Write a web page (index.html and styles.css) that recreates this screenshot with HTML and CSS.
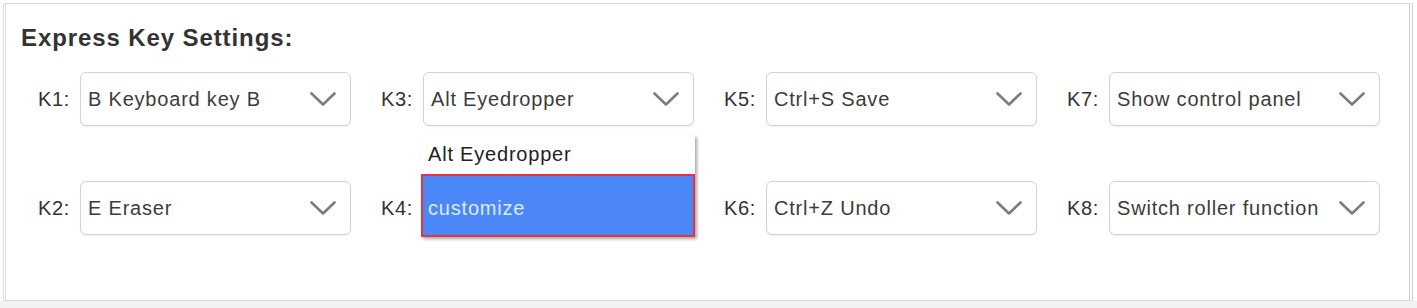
FILE: index.html
```html
<!DOCTYPE html>
<html>
<head>
<meta charset="utf-8">
<link rel="stylesheet" href="styles.css">
</head>
<body>
<div class="page">
  <section class="panel">
    <h1 class="title">Express Key Settings:</h1>
    <div class="keys">
      <div class="key"><span class="lbl">K1:</span><div class="sel"><span>B Keyboard key B</span><svg class="chev" viewBox="0 0 26 14"><polyline points="1.5,1.5 13,12.5 24.5,1.5"/></svg></div></div>
      <div class="key has-pop"><span class="lbl">K3:</span><div class="sel"><span>Alt Eyedropper</span><svg class="chev" viewBox="0 0 26 14"><polyline points="1.5,1.5 13,12.5 24.5,1.5"/></svg></div>
        <div class="pop">
          <div class="opt">Alt Eyedropper</div>
          <div class="opt active">customize</div>
        </div>
      </div>
      <div class="key"><span class="lbl">K5:</span><div class="sel"><span>Ctrl+S Save</span><svg class="chev" viewBox="0 0 26 14"><polyline points="1.5,1.5 13,12.5 24.5,1.5"/></svg></div></div>
      <div class="key"><span class="lbl">K7:</span><div class="sel"><span>Show control panel</span><svg class="chev" viewBox="0 0 26 14"><polyline points="1.5,1.5 13,12.5 24.5,1.5"/></svg></div></div>
      <div class="key"><span class="lbl">K2:</span><div class="sel"><span>E Eraser</span><svg class="chev" viewBox="0 0 26 14"><polyline points="1.5,1.5 13,12.5 24.5,1.5"/></svg></div></div>
      <div class="key"><span class="lbl">K4:</span><div class="sel"><span></span><svg class="chev" viewBox="0 0 26 14"><polyline points="1.5,1.5 13,12.5 24.5,1.5"/></svg></div></div>
      <div class="key"><span class="lbl">K6:</span><div class="sel"><span>Ctrl+Z Undo</span><svg class="chev" viewBox="0 0 26 14"><polyline points="1.5,1.5 13,12.5 24.5,1.5"/></svg></div></div>
      <div class="key"><span class="lbl">K8:</span><div class="sel"><span>Switch roller function</span><svg class="chev" viewBox="0 0 26 14"><polyline points="1.5,1.5 13,12.5 24.5,1.5"/></svg></div></div>
    </div>
  </section>
  <div class="foot"></div>
</div>
</body>
</html>
```

FILE: styles.css
```css
html, body {
  margin: 0;
  padding: 0;
  background: #ffffff;
}
body {
  width: 1417px;
  height: 308px;
  overflow: hidden;
  font-family: "Liberation Sans", Arial, sans-serif;
}
.page {
  display: flex;
  flex-direction: column;
  height: 308px;
}
.panel {
  box-sizing: border-box;
  margin: 3px 4px 0 3px;
  height: 298px;
  border: 1px solid #dadada;
  border-right: 4px double #d2d2d2;
  border-left: 3px double #dcdcdc;
  background: #fff;
  padding: 22px 0 0 15px;
}
.title {
  margin: 0;
  font-size: 24px;
  line-height: 24px;
  font-weight: bold;
  letter-spacing: 0.9px;
  color: #333;
}
.keys {
  margin-top: 22px;
  padding-left: 17px;
  display: grid;
  grid-template-columns: repeat(4, 313px);
  column-gap: 30px;
  row-gap: 55px;
}
.key {
  display: flex;
  align-items: center;
  position: relative;
}
.lbl {
  width: 42px;
  flex: none;
  font-size: 20px;
  letter-spacing: 0.6px;
  color: #333;
}
.sel {
  box-sizing: border-box;
  width: 271px;
  height: 54px;
  border: 1px solid #d3d3d3;
  border-radius: 6px;
  display: flex;
  align-items: center;
  justify-content: space-between;
  padding: 0 14px 0 7px;
  font-size: 20px;
  letter-spacing: 0.8px;
  color: #3c3c3c;
  background: #fff;
  box-shadow: 0 1px 1px rgba(0,0,0,0.06);
}
.chev {
  width: 26px;
  height: 14px;
  flex: none;
}
.chev polyline {
  fill: none;
  stroke: #7d7d7d;
  stroke-width: 2.6;
  stroke-linecap: round;
  stroke-linejoin: round;
}
.pop {
  position: absolute;
  z-index: 5;
  left: 40px;
  top: 63px;
  width: 274px;
  background: #fff;
  box-shadow: 2px 2px 3px rgba(0,0,0,0.35);
}
.opt {
  box-sizing: border-box;
  height: 39px;
  display: flex;
  align-items: center;
  padding-left: 7px;
  font-size: 20px;
  letter-spacing: 0.8px;
  color: #222;
}
.opt.active {
  height: 63px;
  border: 2px solid #e3353b;
  background: #4b87f7;
  color: #dfeaff;
  padding: 5px 0 0 5px;
}
.foot {
  flex: 1;
  background: #f2f2f4;
}
```
